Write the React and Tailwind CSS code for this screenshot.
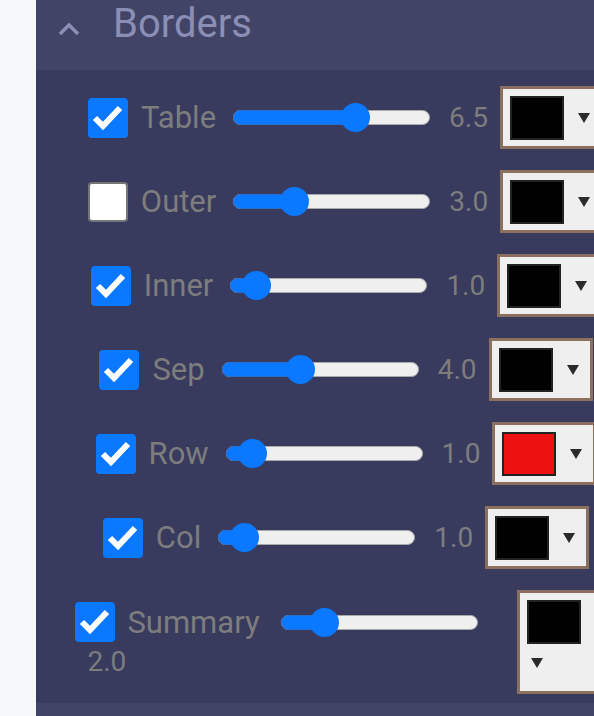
import React from "react";

const borderRows = [
  { label: "Table", value: 6.5, checked: true, color: "#000000" },
  { label: "Outer", value: 3.0, checked: false, color: "#000000" },
  { label: "Inner", value: 1.0, checked: true, color: "#000000" },
  { label: "Sep", value: 4.0, checked: true, color: "#000000" },
  { label: "Row", value: 1.0, checked: true, color: "#ee1111" },
  { label: "Col", value: 1.0, checked: true, color: "#000000" },
];

function Checkbox({ checked }) {
  if (!checked) {
    return (
      <div className="w-[40px] h-[40px] shrink-0 rounded-[4px] bg-white border-[2px] border-[#767676]" />
    );
  }
  return (
    <div className="w-[40px] h-[40px] shrink-0 rounded-[4px] bg-[#0a78ff] flex items-center justify-center">
      <svg width="40" height="40" viewBox="0 0 40 40">
        <polyline
          points="7,20 15,28 32,10"
          fill="none"
          stroke="#ffffff"
          strokeWidth="6"
        />
      </svg>
    </div>
  );
}

// slider 0..10, thumb 29px
function Slider({ value }) {
  const center = 9 + value * 17.4;
  return (
    <div className="relative w-[197px] h-[30px] shrink-0 flex items-center">
      <div className="w-full h-[15px] rounded-full bg-[#efefef] border border-[#a9a9a9]" />
      <div
        className="absolute left-0 h-[15px] rounded-l-full bg-[#0a78ff] border border-[#2a6ccc]"
        style={{ width: center }}
      />
      <div
        className="absolute w-[29px] h-[29px] rounded-full bg-[#0a78ff]"
        style={{ left: center - 14.5 }}
      />
    </div>
  );
}

function Arrow() {
  return (
    <svg width="12" height="10" viewBox="0 0 12 10" className="shrink-0">
      <polygon points="0,0 12,0 6,10" fill="#2b2b2b" />
    </svg>
  );
}

function ColorPicker({ color }) {
  return (
    <div className="w-[104px] h-[63px] shrink-0 bg-[#efefef] border-[3px] border-[#8b705d] flex items-center pl-[7px]">
      <div
        className="w-[54px] h-[44px] border-[2px] border-[#222222]"
        style={{ backgroundColor: color }}
      />
      <div className="ml-[14px]">
        <Arrow />
      </div>
    </div>
  );
}

function BorderRow({ row }) {
  return (
    <div className="h-[63px] flex items-center justify-center">
      <Checkbox checked={row.checked} />
      <span className="ml-[13px] text-[31px] leading-none text-[#7d7d7d]">
        {row.label}
      </span>
      <div className="ml-[17px]">
        <Slider value={row.value} />
      </div>
      <span className="ml-[19px] text-[28px] leading-none text-[#7d7d7d]">
        {row.value.toFixed(1)}
      </span>
      <div className="ml-[12px]">
        <ColorPicker color={row.color} />
      </div>
    </div>
  );
}

function SummaryRow() {
  return (
    <div className="h-[104px] flex justify-center">
      <div className="flex flex-col pt-[12px]">
        <div className="flex items-center">
          <Checkbox checked={true} />
          <span className="ml-[12px] text-[31px] leading-none text-[#7d7d7d]">
            Summary
          </span>
          <div className="ml-[21px]">
            <Slider value={2.0} />
          </div>
        </div>
        <span className="ml-[12px] mt-[6px] text-[28px] leading-none text-[#7d7d7d]">
          2.0
        </span>
      </div>
      <div className="ml-[39px] w-[100px] h-[104px] shrink-0 bg-[#efefef] border-[3px] border-[#8b705d] pl-[7px] pt-[7px] flex flex-col">
        <div className="w-[54px] h-[44px] border-[2px] border-[#222222] bg-black" />
        <div className="ml-[4px] mt-[14px]">
          <Arrow />
        </div>
      </div>
    </div>
  );
}

export default function App() {
  return (
    <div
      className="w-[594px] h-[716px] overflow-hidden flex bg-[#f7f8fa]"
      style={{ fontFamily: "Roboto, 'Noto Sans', sans-serif" }}
    >
      <div className="w-[36px] shrink-0 bg-[#f7f8fa]" />
      <div className="w-[620px] shrink-0 flex flex-col">
        {/* accordion header */}
        <div className="h-[70px] bg-[#414466] flex items-start">
          <svg width="24" height="14" viewBox="0 0 24 14" className="ml-[21px] mt-[22px]">
            <polyline
              points="3,12 12,3 21,12"
              fill="none"
              stroke="#8b8fb5"
              strokeWidth="3.5"
            />
          </svg>
          <span className="ml-[32px] pt-[4px] text-[40px] leading-none text-[#8b8fb5]">
            Borders
          </span>
        </div>
        <div className="bg-[#383a5e] pt-[16px] pb-[9px] flex flex-col gap-[21px]">
          {borderRows.map((row) => (
            <BorderRow key={row.label} row={row} />
          ))}
          <SummaryRow />
        </div>
        <div className="flex-1 bg-[#414466]" />
      </div>
    </div>
  );
}
